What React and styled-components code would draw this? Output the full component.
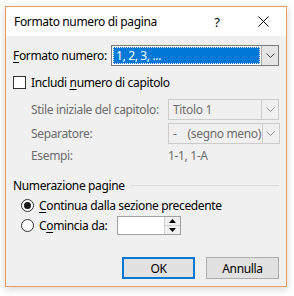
import React from 'react';
import styled, { createGlobalStyle } from 'styled-components';

const GlobalStyle = createGlobalStyle`
  body {
    margin: 0;
    background: #ffffff;
    font-family: "Noto Sans", "Open Sans", sans-serif;
    font-size: 12px;
    letter-spacing: -0.35px;
    color: #000;
  }
`

const Page = styled.div`
  width: 294px;
  height: 296px;
  padding: 6px 0 0 5px;
  box-sizing: border-box;
`

const Window = styled.div`
  width: 282px;
  height: 281px;
  box-sizing: border-box;
  border: 1px solid #ea9d5f;
  background: #f0f0f0;
  box-shadow: 0 2px 8px rgba(0, 0, 0, 0.18);
  display: flex;
  flex-direction: column;
`

const TitleBar = styled.div`
  height: 29px;
  background: #ffffff;
  display: flex;
  align-items: center;
  padding-left: 8px;
`

const Title = styled.div`
  flex: 1;
  font-size: 12px;
`

const TitleButton = styled.div`
  width: 46px;
  height: 29px;
  display: flex;
  align-items: center;
  justify-content: center;
  font-size: 13px;
`

const Body = styled.div`
  flex: 1;
  display: flex;
  flex-direction: column;
  padding: 9px 7px 0 7px;
`

const Row = styled.div`
  display: flex;
  align-items: center;
  white-space: nowrap;
  height: ${p => p.$h || 21}px;
  margin-top: ${p => p.$mt || 0}px;
  padding-left: ${p => p.$indent || 0}px;
  color: ${p => (p.$disabled ? '#6d6d6d' : '#000')};
`

const Label = styled.span`
  width: ${p => p.$w}px;
  flex-shrink: 0;
`

const Select = styled.div`
  flex: 1;
  height: 21px;
  box-sizing: border-box;
  border: 1px solid ${p => (p.$disabled ? '#cccccc' : '#7a7a7a')};
  background: ${p => (p.$disabled ? '#f0f0f0' : '#ffffff')};
  display: flex;
  align-items: stretch;
  padding: 1px;
`

const SelectValue = styled.div`
  flex: 1;
  display: flex;
  align-items: center;
  padding-left: 3px;
  white-space: pre;
  background: ${p => (p.$selected ? '#0078d7' : 'transparent')};
  color: ${p => (p.$selected ? '#ffffff' : 'inherit')};
  outline: ${p => (p.$selected ? '1px dotted #ffffff' : 'none')};
  outline-offset: -1px;
`

const SelectArrow = styled.div`
  width: 16px;
  margin: -1px -1px -1px 1px;
  border-left: 1px solid ${p => (p.$disabled ? '#cccccc' : '#adadad')};
  background: ${p => (p.$disabled ? '#f0f0f0' : '#e5e5e5')};
  display: flex;
  align-items: center;
  justify-content: center;
`

const Check = styled.span`
  width: 13px;
  height: 13px;
  box-sizing: border-box;
  border: 1px solid #333;
  background: #fff;
  margin-right: 5px;
`

const Radio = styled.span`
  width: 13px;
  height: 13px;
  box-sizing: border-box;
  border: 1px solid #333;
  border-radius: 50%;
  background: #fff;
  margin-right: 5px;
  display: flex;
  align-items: center;
  justify-content: center;
  &::after {
    content: '';
    width: 7px;
    height: 7px;
    border-radius: 50%;
    background: ${p => (p.$on ? '#1a1a1a' : 'transparent')};
  }
`

const GroupTitle = styled.div`
  display: flex;
  align-items: center;
  margin-top: 12px;
  height: 16px;
  white-space: nowrap;
  &::after {
    content: '';
    flex: 1;
    height: 1px;
    background: #dcdcdc;
    margin-left: 6px;
  }
`

const Spinner = styled.div`
  width: 64px;
  height: 19px;
  box-sizing: border-box;
  border: 1px solid #a0a0a0;
  background: #fff;
  display: flex;
  justify-content: flex-end;
  margin-left: 10px;
`

const SpinButtons = styled.div`
  width: 15px;
  display: flex;
  flex-direction: column;
  border-left: 1px solid #cfcfcf;
  background: #f0f0f0;
`

const SpinHalf = styled.div`
  flex: 1;
  display: flex;
  align-items: center;
  justify-content: center;
  border-bottom: ${p => (p.$top ? '1px solid #cfcfcf' : 'none')};
`

const Buttons = styled.div`
  display: flex;
  justify-content: flex-end;
  gap: 11px;
  margin-top: auto;
  margin-bottom: 7px;
`

const Button = styled.div`
  width: 73px;
  height: 22px;
  box-sizing: border-box;
  border: ${p => (p.$primary ? '2px solid #0078d7' : '1px solid #adadad')};
  background: #e1e1e1;
  display: flex;
  align-items: center;
  justify-content: center;
`

const U = styled.span`
  text-decoration: underline;
  text-underline-offset: 2px;
`

const Chevron = ({ color = '#555' }) => (
  <svg width="9" height="5" viewBox="0 0 9 5">
    <path d="M0.5 0.5 L4.5 4.5 L8.5 0.5" fill="none" stroke={color} strokeWidth="1" />
  </svg>
)

const Tri = ({ up }) => (
  <svg width="7" height="4" viewBox="0 0 7 4">
    <path d={up ? 'M0 4 L3.5 0 L7 4 Z' : 'M0 0 L3.5 4 L7 0 Z'} fill="#000" />
  </svg>
)

const App = () => {
  return (
    <Page>
      <GlobalStyle />
      <Window>
        <TitleBar>
          <Title>Formato numero di pagina</Title>
          <TitleButton>?</TitleButton>
          <TitleButton>
            <svg width="11" height="11" viewBox="0 0 11 11">
              <path d="M0.5 0.5 L10.5 10.5 M10.5 0.5 L0.5 10.5" stroke="#000" strokeWidth="1" />
            </svg>
          </TitleButton>
        </TitleBar>
        <Body>
          <Row>
            <Label $w={98}><U>F</U>ormato numero:</Label>
            <Select>
              <SelectValue $selected>1, 2, 3, ...</SelectValue>
              <SelectArrow><Chevron /></SelectArrow>
            </Select>
          </Row>
          <Row $mt={8} $h={16}>
            <Check />
            <span>Includi <U>n</U>umero di capitolo</span>
          </Row>
          <Row $mt={9} $indent={18} $disabled>
            <Label $w={137}>Stile iniziale del capitolo:</Label>
            <Select $disabled>
              <SelectValue>Titolo 1</SelectValue>
              <SelectArrow $disabled><Chevron color="#9a9a9a" /></SelectArrow>
            </Select>
          </Row>
          <Row $mt={3} $indent={18} $disabled>
            <Label $w={137}>Separatore:</Label>
            <Select $disabled>
              <SelectValue>-    (segno meno)</SelectValue>
              <SelectArrow $disabled><Chevron color="#9a9a9a" /></SelectArrow>
            </Select>
          </Row>
          <Row $mt={1} $indent={18} $h={20} $disabled>
            <Label $w={137}>Esempi:</Label>
            <span>1-1, 1-A</span>
          </Row>
          <GroupTitle>Numerazione pagine</GroupTitle>
          <Row $mt={3} $h={18} $indent={8}>
            <Radio $on />
            <span><U>C</U>ontinua dalla sezione precedente</span>
          </Row>
          <Row $mt={2} $h={19} $indent={8}>
            <Radio />
            <span>C<U>o</U>mincia da:</span>
            <Spinner>
              <SpinButtons>
                <SpinHalf $top><Tri up /></SpinHalf>
                <SpinHalf><Tri /></SpinHalf>
              </SpinButtons>
            </Spinner>
          </Row>
          <Buttons>
            <Button $primary>OK</Button>
            <Button>Annulla</Button>
          </Buttons>
        </Body>
      </Window>
    </Page>
  );
};

export default App;
